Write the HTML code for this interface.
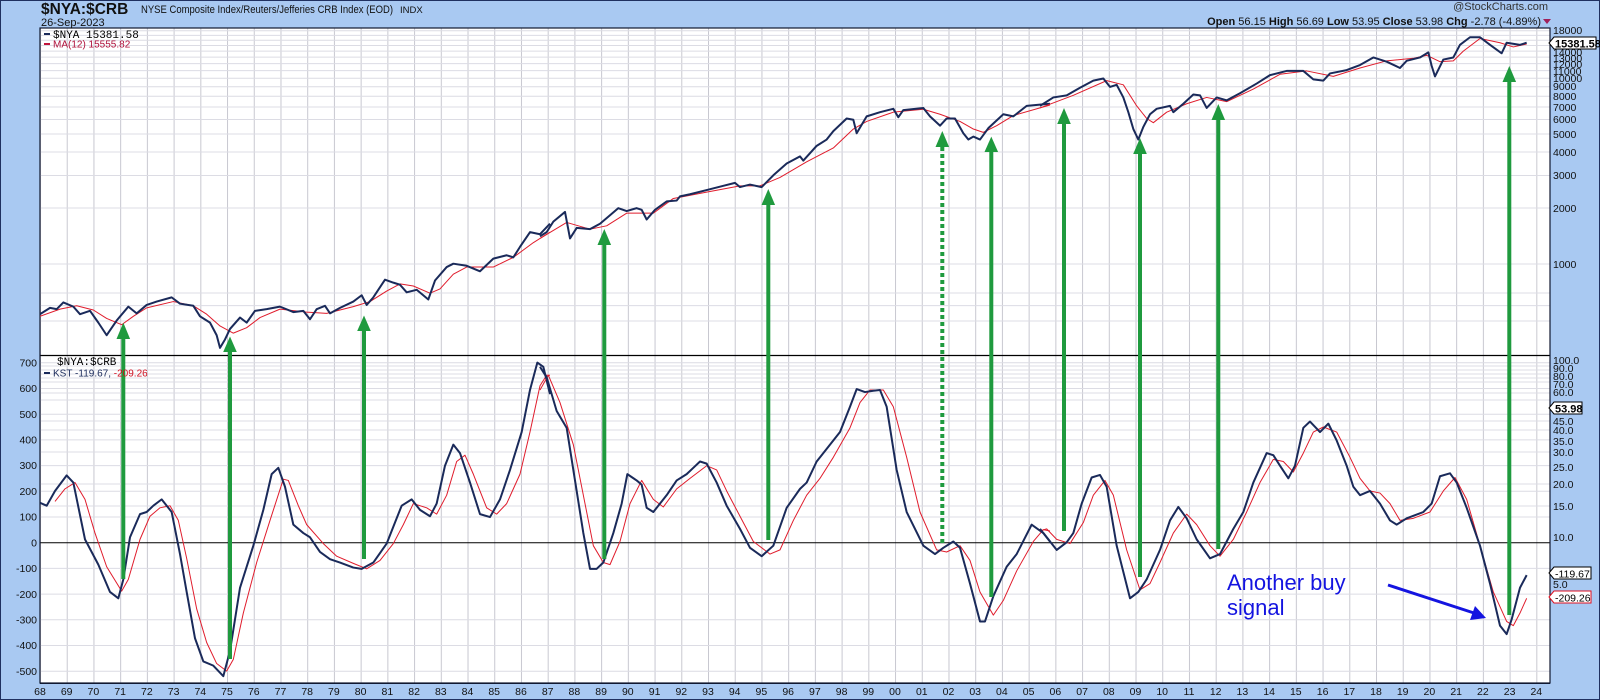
<!DOCTYPE html>
<html><head><meta charset="utf-8"><style>
html,body{margin:0;padding:0;background:#a9c9f2;}
svg{display:block;font-family:"Liberation Sans",Arial,sans-serif;}
</style></head><body>
<svg width="1600" height="700" viewBox="0 0 1600 700" xmlns="http://www.w3.org/2000/svg">
<defs>
<pattern id="vg" x="40" y="0" width="26.72" height="700" patternUnits="userSpaceOnUse">
<line x1="0.5" y1="0" x2="0.5" y2="700" stroke="#c8c8d0" stroke-width="1"/>
</pattern>
<clipPath id="pc"><rect x="40" y="28" width="1510" height="655"/></clipPath>
</defs>
<rect x="0" y="0" width="1600" height="700" fill="#a9c9f2"/>
<rect x="0.5" y="0.5" width="1599" height="699" fill="none" stroke="#203060"/>
<rect x="40" y="28" width="1510" height="655" fill="#fff"/>
<rect x="40" y="28" width="1510" height="655" fill="url(#vg)"/>
<g stroke="#dcdce4" stroke-width="1">
<line x1="40" x2="1550" y1="30.8" y2="30.8"/><line x1="40" x2="1550" y1="35.4" y2="35.4"/><line x1="40" x2="1550" y1="40.3" y2="40.3"/><line x1="40" x2="1550" y1="45.5" y2="45.5"/><line x1="40" x2="1550" y1="51.1" y2="51.1"/><line x1="40" x2="1550" y1="57.1" y2="57.1"/><line x1="40" x2="1550" y1="63.6" y2="63.6"/><line x1="40" x2="1550" y1="70.6" y2="70.6"/><line x1="40" x2="1550" y1="78.3" y2="78.3"/><line x1="40" x2="1550" y1="86.8" y2="86.8"/><line x1="40" x2="1550" y1="96.3" y2="96.3"/><line x1="40" x2="1550" y1="107" y2="107"/><line x1="40" x2="1550" y1="119.5" y2="119.5"/><line x1="40" x2="1550" y1="134" y2="134"/><line x1="40" x2="1550" y1="152" y2="152"/><line x1="40" x2="1550" y1="175.5" y2="175.5"/><line x1="40" x2="1550" y1="208" y2="208"/><line x1="40" x2="1550" y1="264" y2="264"/><line x1="40" x2="1550" y1="293" y2="293"/><line x1="40" x2="1550" y1="305.6" y2="305.6"/><line x1="40" x2="1550" y1="321" y2="321"/>
<line x1="40" x2="1550" y1="362.7" y2="362.7"/><line x1="40" x2="1550" y1="366" y2="366"/><line x1="40" x2="1550" y1="370" y2="370"/><line x1="40" x2="1550" y1="374" y2="374"/><line x1="40" x2="1550" y1="378" y2="378"/><line x1="40" x2="1550" y1="382" y2="382"/><line x1="40" x2="1550" y1="388.5" y2="388.5"/><line x1="40" x2="1550" y1="393" y2="393"/><line x1="40" x2="1550" y1="400" y2="400"/><line x1="40" x2="1550" y1="414.2" y2="414.2"/><line x1="40" x2="1550" y1="421" y2="421"/><line x1="40" x2="1550" y1="430" y2="430"/><line x1="40" x2="1550" y1="439.9" y2="439.9"/><line x1="40" x2="1550" y1="452" y2="452"/><line x1="40" x2="1550" y1="465.6" y2="465.6"/><line x1="40" x2="1550" y1="484" y2="484"/><line x1="40" x2="1550" y1="491.3" y2="491.3"/><line x1="40" x2="1550" y1="506" y2="506"/><line x1="40" x2="1550" y1="517" y2="517"/><line x1="40" x2="1550" y1="568.4" y2="568.4"/><line x1="40" x2="1550" y1="594.1" y2="594.1"/><line x1="40" x2="1550" y1="619.8" y2="619.8"/><line x1="40" x2="1550" y1="645.5" y2="645.5"/><line x1="40" x2="1550" y1="671.3" y2="671.3"/>
</g>
<line x1="40" x2="1550" y1="355.5" y2="355.5" stroke="#000" stroke-width="1.2"/>
<line x1="40" x2="1550" y1="542.7" y2="542.7" stroke="#000" stroke-width="1"/>
<rect x="40" y="28" width="1510" height="655" fill="none" stroke="#101830" stroke-width="1.2"/>

<g clip-path="url(#pc)" fill="none" stroke-linejoin="round">
<g transform="translate(40 28) scale(0.33333 0.42088)">
<polyline vector-effect="non-scaling-stroke" stroke="#e01c2c" stroke-width="1" points="0,685 60,668 110,660 160,670 200,690 245,705 280,685 320,665 400,650 460,660 500,680 540,708 580,725 620,712 660,688 720,668 800,675 860,678 940,662 990,650 1040,625 1080,608 1120,613 1170,630 1200,620 1240,585 1280,568 1360,568 1420,545 1480,510 1530,485"/>
<polyline vector-effect="non-scaling-stroke" stroke="#1a2a5a" stroke-width="2" points="0,680 30,665 50,668 70,652 100,662 120,680 150,672 175,700 200,730 230,695 265,662 290,678 320,658 350,650 395,640 420,655 460,660 480,685 510,700 530,730 540,760 555,740 570,715 600,688 620,700 645,672 680,668 720,662 760,675 790,672 810,692 830,668 855,660 870,678 900,665 940,650 965,635 980,658 1000,640 1035,598 1060,605 1080,610 1100,628 1130,622 1165,645 1185,600 1220,568 1240,560 1280,565 1320,578 1360,548 1400,540 1420,545 1440,520 1470,485 1500,490 1530,465"/>
<polyline vector-effect="non-scaling-stroke" stroke="#e01c2c" stroke-width="1" points="45,1125 75,1095 105,1080 135,1120 165,1200 200,1280 245,1338 265,1310 300,1215 330,1160 360,1140 390,1135 415,1170 440,1260 470,1380 500,1460 530,1510 560,1528 580,1500 610,1390 650,1270 690,1170 730,1072 745,1075 775,1135 800,1180 850,1225 890,1255 940,1272 980,1285 1020,1265 1060,1225 1090,1180 1120,1130 1160,1140 1190,1155 1220,1110 1250,1030 1275,1015 1300,1060 1340,1140 1370,1155 1400,1130 1440,1060 1470,960 1500,850 1520,825 1530,825"/>
<polyline vector-effect="non-scaling-stroke" stroke="#1a2a5a" stroke-width="2" points="0,1128 20,1135 45,1100 80,1063 100,1080 135,1215 175,1275 210,1340 235,1355 250,1310 270,1210 300,1155 320,1150 340,1135 365,1120 395,1150 420,1250 440,1340 465,1450 490,1505 520,1515 550,1540 570,1480 600,1330 640,1230 670,1145 695,1060 715,1045 735,1090 760,1180 790,1200 810,1210 840,1245 870,1262 900,1270 940,1282 965,1285 1000,1270 1040,1225 1065,1175 1085,1135 1115,1120 1140,1145 1170,1160 1190,1130 1215,1040 1240,990 1260,1010 1290,1080 1320,1155 1350,1162 1380,1120 1410,1050 1445,960 1470,860 1492,795 1510,805 1530,870"/>
</g>
<g transform="translate(540 28) scale(0.33333 0.42088)">
<polyline vector-effect="non-scaling-stroke" stroke="#e01c2c" stroke-width="1" points="0,500 80,462 150,478 200,470 260,440 340,440 400,405 500,390 600,375 660,375 720,355 800,318 880,285 940,240 980,222 1060,200 1150,193 1200,205 1260,222 1300,240 1330,248 1370,232 1420,208 1530,183"/>
<polyline vector-effect="non-scaling-stroke" stroke="#1a2a5a" stroke-width="2" points="0,495 20,485 40,460 75,437 90,500 110,475 150,478 180,465 210,445 235,428 260,435 290,428 305,432 320,455 345,432 380,412 410,410 420,400 450,395 500,385 550,375 585,368 600,378 630,372 665,378 700,350 740,322 780,305 790,315 830,280 860,265 880,245 920,215 940,218 950,250 980,210 1020,200 1060,192 1075,212 1090,195 1150,190 1170,210 1200,232 1220,215 1245,215 1270,250 1285,265 1300,258 1320,265 1345,238 1390,205 1420,210 1460,185 1500,182 1530,180"/>
<polyline vector-effect="non-scaling-stroke" stroke="#e01c2c" stroke-width="1" points="0,860 25,825 60,890 100,990 130,1110 160,1230 190,1270 210,1275 240,1220 270,1130 305,1075 340,1120 370,1138 410,1095 450,1070 500,1040 530,1050 560,1100 600,1160 640,1220 690,1250 720,1240 760,1170 800,1110 840,1070 880,1020 930,950 960,890 990,860 1030,860 1060,900 1100,1020 1140,1150 1190,1240 1220,1245 1260,1230 1290,1265 1320,1340 1360,1395 1390,1360 1430,1290 1480,1220 1510,1192 1530,1195"/>
<polyline vector-effect="non-scaling-stroke" stroke="#1a2a5a" stroke-width="2" points="0,805 20,830 50,910 80,950 100,1050 130,1200 150,1285 170,1285 190,1270 220,1200 245,1130 262,1060 290,1075 305,1085 320,1140 340,1150 380,1110 410,1075 440,1060 460,1045 480,1030 500,1035 530,1080 560,1135 600,1190 630,1235 665,1255 700,1230 740,1140 780,1095 800,1080 830,1030 860,1000 900,960 930,900 950,858 975,865 1000,862 1020,860 1040,900 1070,1050 1100,1150 1150,1230 1185,1250 1210,1235 1240,1220 1260,1235 1290,1320 1320,1410 1335,1410 1360,1350 1400,1280 1430,1250 1475,1180 1510,1200 1530,1220"/>
</g>
<g transform="translate(1040 28) scale(0.33333 0.42088)">
<polyline vector-effect="non-scaling-stroke" stroke="#e01c2c" stroke-width="1" points="0,190 100,160 200,125 250,135 290,185 320,215 340,225 380,200 440,180 500,165 560,175 640,145 720,110 800,102 880,115 960,95 1040,78 1120,72 1160,65 1200,80 1240,78 1270,55 1320,25 1380,35 1420,45 1460,38"/>
<polyline vector-effect="non-scaling-stroke" stroke="#1a2a5a" stroke-width="2" points="0,185 40,165 80,160 120,142 160,125 190,120 210,140 230,135 250,165 265,200 280,240 295,265 310,235 330,205 350,192 390,185 400,200 430,180 460,158 480,160 500,190 530,165 560,172 600,155 650,132 690,112 740,102 790,102 820,122 850,125 870,108 920,100 960,88 1000,70 1040,80 1080,95 1100,78 1140,70 1165,58 1175,90 1185,115 1210,75 1240,70 1260,40 1290,22 1320,22 1350,40 1385,60 1400,35 1440,40 1460,35"/>
<polyline vector-effect="non-scaling-stroke" stroke="#e01c2c" stroke-width="1" points="0,1195 20,1190 50,1215 90,1225 130,1175 160,1110 195,1075 220,1110 260,1240 300,1335 330,1320 360,1270 400,1200 440,1155 470,1180 510,1230 540,1255 580,1215 620,1150 660,1080 700,1025 730,1030 760,1055 790,1010 820,960 850,948 890,960 930,1020 960,1070 990,1100 1020,1105 1050,1130 1080,1170 1120,1165 1170,1150 1210,1100 1245,1068 1280,1120 1320,1230 1360,1340 1400,1410 1420,1420 1440,1390 1460,1355"/>
<polyline vector-effect="non-scaling-stroke" stroke="#1a2a5a" stroke-width="2" points="0,1190 25,1215 50,1240 80,1222 100,1200 125,1130 155,1068 180,1062 200,1090 230,1230 270,1355 295,1340 320,1310 360,1240 390,1170 415,1138 440,1165 470,1215 510,1260 540,1250 580,1190 610,1150 640,1080 680,1010 700,1015 720,1040 745,1070 765,1040 790,950 810,935 840,960 865,940 890,980 920,1040 940,1090 960,1110 990,1100 1020,1130 1050,1170 1070,1180 1100,1165 1150,1150 1175,1130 1200,1065 1230,1058 1250,1080 1280,1140 1320,1230 1350,1320 1380,1420 1400,1440 1415,1405 1440,1330 1460,1300"/>
</g>
</g>

<g fill="#1f9a3e" stroke="#1f9a3e" stroke-width="4">
<line x1="123.3" y1="339" x2="123.3" y2="579"/><polygon stroke="none" points="123.3,322.6 116.5,339 130.1,339"/>
<line x1="230" y1="352" x2="230" y2="659"/><polygon stroke="none" points="230,336.5 223.2,352 236.8,352"/>
<line x1="364" y1="331" x2="364" y2="559"/><polygon stroke="none" points="364,315.5 357.2,331 370.8,331"/>
<line x1="604.3" y1="245" x2="604.3" y2="559"/><polygon stroke="none" points="604.3,229 597.5,245 611.1,245"/>
<line x1="768.3" y1="205" x2="768.3" y2="540"/><polygon stroke="none" points="768.3,189 761.5,205 775.1,205"/>
<line x1="942.3" y1="147" x2="942.3" y2="546" stroke-dasharray="4,3"/><polygon stroke="none" points="942.3,131 935.5,147 949.1,147"/>
<line x1="991.3" y1="152" x2="991.3" y2="597"/><polygon stroke="none" points="991.3,136.6 984.5,152 998.1,152"/>
<line x1="1064" y1="124" x2="1064" y2="531"/><polygon stroke="none" points="1064,108 1057.2,124 1070.8,124"/>
<line x1="1140" y1="154" x2="1140" y2="577"/><polygon stroke="none" points="1140,138 1133.2,154 1146.8,154"/>
<line x1="1218.3" y1="120" x2="1218.3" y2="549"/><polygon stroke="none" points="1218.3,104 1211.5,120 1225.1,120"/>
<line x1="1509.3" y1="82" x2="1509.3" y2="615"/><polygon stroke="none" points="1509.3,66 1502.5,82 1516.1,82"/>
</g>

<text x="1227" y="590" font-size="22" fill="#1414e0">Another buy</text>
<text x="1227" y="615" font-size="22" fill="#1414e0">signal</text>
<line x1="1388" y1="585" x2="1474" y2="613" stroke="#1414e0" stroke-width="3"/>
<polygon points="1486,618 1470,620 1475,606" fill="#1414e0"/>

<line x1="44" y1="34" x2="50" y2="34" stroke="#1a2a5a" stroke-width="2"/>
<text x="53" y="38" font-size="11" font-family="Liberation Mono,monospace" fill="#000">$NYA 15381.58</text>
<line x1="44" y1="44" x2="50" y2="44" stroke="#c0143c" stroke-width="2"/>
<text x="53" y="47.5" font-size="10" fill="#b0103a">MA(12) 15555.82</text>
<text x="57" y="365" font-size="11" font-family="Liberation Mono,monospace" fill="#000">$NYA:$CRB</text>
<line x1="44" y1="373" x2="50" y2="373" stroke="#1a2a5a" stroke-width="2"/>
<text x="53" y="376.5" font-size="10" fill="#1a2a5a">KST -119.67, <tspan fill="#d01020">-209.26</tspan></text>

<text x="41" y="14" font-size="15.5" font-weight="bold" fill="#111">$NYA:$CRB</text>
<text x="141" y="13" font-size="11" fill="#111" textLength="252" lengthAdjust="spacingAndGlyphs">NYSE Composite Index/Reuters/Jefferies CRB Index (EOD)</text>
<text x="400" y="13" font-size="9.5" fill="#111">INDX</text>
<text x="41" y="26" font-size="11" fill="#111">26-Sep-2023</text>
<text x="1548" y="10" font-size="11" fill="#333" text-anchor="end">@StockCharts.com</text>
<text x="1541" y="25" font-size="11" fill="#111" text-anchor="end"><tspan font-weight="bold">Open</tspan> 56.15 <tspan font-weight="bold">High</tspan> 56.69 <tspan font-weight="bold">Low</tspan> 53.95 <tspan font-weight="bold">Close</tspan> 53.98 <tspan font-weight="bold">Chg</tspan> -2.78 (-4.89%)</text>
<polygon points="1543,19 1551,19 1547,24" fill="#a0205a"/>

<g font-size="10.5" fill="#111">
<text x="1553" y="34">18000</text><text x="1553" y="56">14000</text><text x="1553" y="62">13000</text><text x="1553" y="68">12000</text><text x="1553" y="75">11000</text><text x="1553" y="82">10000</text><text x="1553" y="90">9000</text><text x="1553" y="100">8000</text><text x="1553" y="111">7000</text><text x="1553" y="123">6000</text><text x="1553" y="138">5000</text><text x="1553" y="156">4000</text><text x="1553" y="179">3000</text><text x="1553" y="212">2000</text><text x="1553" y="268">1000</text>
</g>
<polygon points="1549,43 1554,37 1596,37 1596,49 1554,49" fill="#fff" stroke="#000"/>
<text x="1555" y="47.5" font-size="11" font-weight="bold" fill="#000">15381.58</text>
<g font-size="10.5" fill="#111">
<text x="1553" y="364">100.0</text><text x="1553" y="372">90.0</text><text x="1553" y="380">80.0</text><text x="1553" y="388">70.0</text><text x="1553" y="396">60.0</text><text x="1553" y="425">45.0</text><text x="1553" y="434">40.0</text><text x="1553" y="445">35.0</text><text x="1553" y="456">30.0</text><text x="1553" y="471">25.0</text><text x="1553" y="488">20.0</text><text x="1553" y="510">15.0</text><text x="1553" y="541">10.0</text><text x="1553" y="588">5.0</text>
</g>
<polygon points="1549,408 1554,402 1582,402 1582,414 1554,414" fill="#fff" stroke="#000"/>
<text x="1555" y="412.5" font-size="11" font-weight="bold" fill="#000">53.98</text>
<polygon points="1549,573 1554,567 1591,567 1591,579 1554,579" fill="#fff" stroke="#000"/>
<text x="1555" y="577.5" font-size="10.5" fill="#000">-119.67</text>
<polygon points="1549,597 1554,591 1591,591 1591,603 1554,603" fill="#fff" stroke="#e01020"/>
<text x="1555" y="601.5" font-size="10.5" fill="#000">-209.26</text>

<g font-size="10.5" fill="#111" text-anchor="end">
<text x="37" y="366.5">700</text><text x="37" y="392">600</text><text x="37" y="418">500</text><text x="37" y="443.5">400</text><text x="37" y="469">300</text><text x="37" y="495">200</text><text x="37" y="520.5">100</text><text x="37" y="546.5">0</text><text x="37" y="572">-100</text><text x="37" y="598">-200</text><text x="37" y="623.5">-300</text><text x="37" y="649">-400</text><text x="37" y="675">-500</text>
</g>

<line x1="40" x2="1550" y1="683.5" y2="683.5" stroke="#101830"/>
<g font-size="10.5" fill="#111" text-anchor="middle">
<text x="40" y="695">68</text><text x="66.7" y="695">69</text><text x="93.4" y="695">70</text><text x="120.2" y="695">71</text><text x="146.9" y="695">72</text><text x="173.6" y="695">73</text><text x="200.3" y="695">74</text><text x="227" y="695">75</text><text x="253.8" y="695">76</text><text x="280.5" y="695">77</text><text x="307.2" y="695">78</text><text x="333.9" y="695">79</text><text x="360.6" y="695">80</text><text x="387.4" y="695">81</text><text x="414.1" y="695">82</text><text x="440.8" y="695">83</text><text x="467.5" y="695">84</text><text x="494.2" y="695">85</text><text x="521" y="695">86</text><text x="547.7" y="695">87</text><text x="574.4" y="695">88</text><text x="601.1" y="695">89</text><text x="627.8" y="695">90</text><text x="654.6" y="695">91</text><text x="681.3" y="695">92</text><text x="708" y="695">93</text><text x="734.7" y="695">94</text><text x="761.4" y="695">95</text><text x="788.2" y="695">96</text><text x="814.9" y="695">97</text><text x="841.6" y="695">98</text><text x="868.3" y="695">99</text><text x="895" y="695">00</text><text x="921.8" y="695">01</text><text x="948.5" y="695">02</text><text x="975.2" y="695">03</text><text x="1001.9" y="695">04</text><text x="1028.6" y="695">05</text><text x="1055.4" y="695">06</text><text x="1082.1" y="695">07</text><text x="1108.8" y="695">08</text><text x="1135.5" y="695">09</text><text x="1162.2" y="695">10</text><text x="1189" y="695">11</text><text x="1215.7" y="695">12</text><text x="1242.4" y="695">13</text><text x="1269.1" y="695">14</text><text x="1295.8" y="695">15</text><text x="1322.6" y="695">16</text><text x="1349.3" y="695">17</text><text x="1376" y="695">18</text><text x="1402.7" y="695">19</text><text x="1429.4" y="695">20</text><text x="1456.2" y="695">21</text><text x="1482.9" y="695">22</text><text x="1509.6" y="695">23</text><text x="1536.3" y="695">24</text>
</g>
</svg>
</body></html>
